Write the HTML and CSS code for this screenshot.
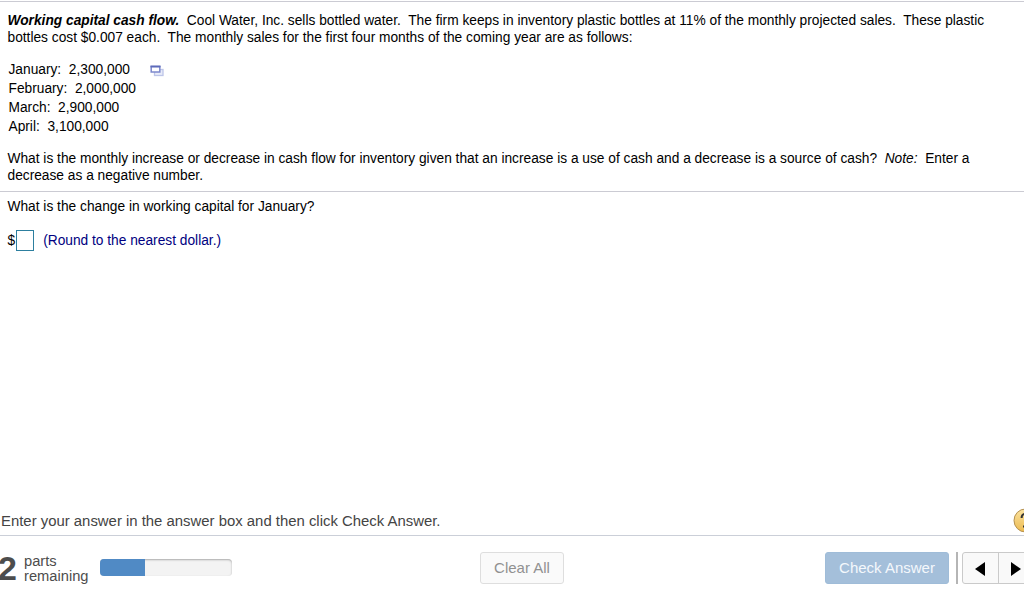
FILE: index.html
```html
<!DOCTYPE html>
<html lang="en">
<head>
<meta charset="utf-8">
<title>Working capital cash flow</title>
<link rel="stylesheet" href="styles.css">
</head>
<body>
<main class="exercise">
  <section class="problem">
    <p class="copy"><span><strong class="heading">Working capital cash flow.</strong>&nbsp; Cool Water, Inc. sells bottled water.&nbsp; The firm keeps in inventory plastic bottles at 11% of the monthly projected sales.&nbsp; These plastic</span><br><span>bottles cost $0.007 each.&nbsp; The monthly sales for the first four months of the coming year are as follows:</span></p>
    <ul class="months">
      <li>January:&nbsp; 2,300,000
        <svg class="popup-icon" width="14" height="12" viewBox="0 0 14 12"><rect x="4.500" y="4.500" width="8.500" height="6" fill="#e8ebf8" stroke="#bdc5e8" stroke-width="1.300"/><rect x="1.200" y="1.500" width="8.600" height="5.500" fill="#fff" stroke="#7c88cc" stroke-width="1.500"/><path d="M.5 1.500h10" stroke="#5d6aba" stroke-width="1.800"/></svg>
      </li>
      <li>February:&nbsp; 2,000,000</li>
      <li>March:&nbsp; 2,900,000</li>
      <li>April:&nbsp; 3,100,000</li>
    </ul>
    <p class="copy"><span>What is the monthly increase or decrease in cash flow for inventory given that an increase is a use of cash and a decrease is a source of cash?&nbsp; <em>Note:</em>&nbsp; Enter a</span><br><span>decrease as a negative number.</span></p>
  </section>
  <section class="question">
    <p class="copy"><span>What is the change in working capital for January?</span></p>
    <div class="answer"><span>$</span><input class="answer-box" type="text" aria-label="Answer"><span class="hint">(Round to the nearest dollar.)</span></div>
  </section>
  <div class="help-row">
    <p class="instruction"><span>Enter your answer in the answer box and then click Check Answer.</span></p>
    <svg class="help" width="11" height="26" viewBox="0 0 11 26"><defs><linearGradient id="gold" x2="0" y2="1"><stop offset="0" stop-color="#fbe3a0"/><stop offset="1" stop-color="#ecba50"/></linearGradient></defs><circle cx="12.500" cy="12.500" r="11.500" fill="url(#gold)" stroke="#b49150"/><path d="M8.600 10c0-3.600 2-4.300 4.400-4.300" fill="none" stroke="#333" stroke-width="2"/><path d="M10 18.500h2" stroke="#333" stroke-width="2"/></svg>
  </div>
  <footer class="toolbar">
    <div class="remaining"><b class="count">2</b><div class="parts"><div>parts</div><div>remaining</div></div><div class="progress"><div class="progress-fill"></div></div></div>
    <button class="button clear">Clear All</button>
    <button class="button check">Check Answer</button>
    <div class="divider"></div>
    <div class="pager">
      <button class="page-button" aria-label="Previous"><svg width="10" height="14" viewBox="0 0 10 14"><path d="M10 0v14L0 7z"/></svg></button>
      <button class="page-button next" aria-label="Next"><svg width="10" height="14" viewBox="0 0 10 14"><path d="M0 0v14l10-7z"/></svg></button>
    </div>
  </footer>
</main>
</body>
</html>
```
FILE: styles.css
```css
* { box-sizing: border-box; }
body { margin: 0; background: #fff; color: #000; font: 13.74px/17px "Liberation Sans", Arial, sans-serif; overflow: hidden; }
p, ul { margin: 0; padding: 0; }
.exercise { display: flex; flex-direction: column; width: 1024px; height: 591px; padding-top: 1px; overflow: hidden; }
.problem { height: 191px; border-top: 1px solid #cbcbd3; border-bottom: 1px solid #cbcbd3; padding: 10px 0 0 7.5px; }
.copy { white-space: nowrap; }
.heading { font-style: italic; }
.months { list-style: none; padding: 14px 0 14px 1px; line-height: 19px; }
.months li { display: flex; align-items: center; height: 19px; white-space: nowrap; }
.popup-icon { margin: 2px 0 0 20px; }
.question { height: 314px; padding: 6px 0 0 7.5px; }
.answer { display: flex; align-items: center; height: 22px; margin-top: 14px; white-space: nowrap; }
.answer-box { width: 18px; height: 21px; margin: 0 9px 0 1px; padding: 0; border: 1px solid #2d7f9f; background: #fff; }
.hint { color: #000080; }
.help-row { display: flex; justify-content: space-between; align-items: flex-start; height: 30px; border-bottom: 1px solid #cbcfd8; color: #444; }
.instruction { padding: 7px 0 0 1px; font-size: 14.9px; white-space: nowrap; }
.help { margin-top: 2px; }
.toolbar { display: flex; align-items: flex-start; height: 55px; padding-top: 16px; }
.toolbar > * { flex: none; }
.remaining { display: flex; width: 480px; color: #4d4d4d; }
.count { width: 24px; margin-left: -2px; font-size: 34px; line-height: 33px; }
.parts { width: 76px; margin-left: 2px; padding-top: 2px; font-size: 14.7px; line-height: 15px; }
.progress { width: 132px; height: 17px; margin-top: 7px; border-radius: 4px; overflow: hidden; background: #f3f3f3; box-shadow: inset 0 1px 2px #aaa; }
.progress-fill { width: 45px; height: 17px; background: #508ac5; }
.button { height: 32px; padding: 0 0 1px; border-radius: 3px; font: 15px "Liberation Sans", Arial, sans-serif; white-space: nowrap; }
.clear { width: 84px; border: 1px solid #dedede; background: #fafafa; color: #919191; }
.check { width: 124px; margin-left: 261px; border: 1px solid #9fbcd8; background: #a4bfda; color: #f4f8fc; }
.divider { width: 2px; height: 32px; margin-left: 7px; background: #b5b5b5; }
.pager { display: flex; margin-left: 4px; }
.page-button { display: flex; flex: none; align-items: center; justify-content: center; width: 37px; height: 32px; padding: 1px 1px 0 0; border: 1px solid #cacaca; border-radius: 3px 0 0 3px; background: #f9f9f9; }
.next { margin-left: -1px; padding-right: 2px; border-radius: 0; }
```
